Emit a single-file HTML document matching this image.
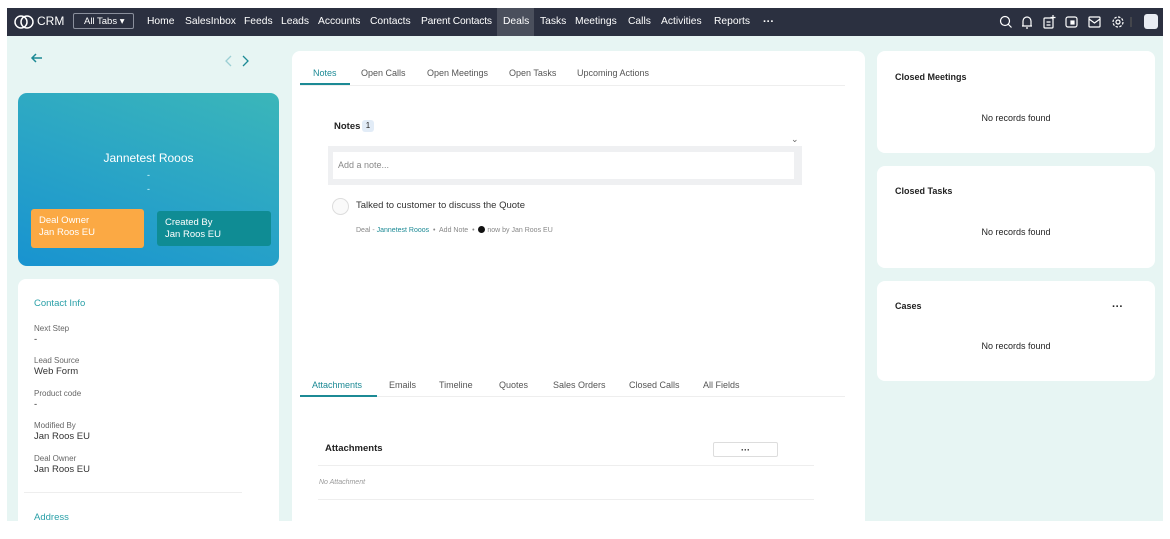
<!DOCTYPE html>
<html><head><meta charset="utf-8"><style>
*{margin:0;padding:0;box-sizing:border-box}
body{width:1170px;height:530px;background:#fff;font-family:"Liberation Sans",sans-serif;position:relative;overflow:hidden;color:#222}
.abs{position:absolute}
#page{position:absolute;left:7px;top:8px;width:1156px;height:513px;background:#e7f5f3}
#nav{position:absolute;left:7px;top:8px;width:1156px;height:28px;background:#2b3040;color:#fff;font-size:10.3px}
#nav span.t{position:absolute;top:8px;white-space:nowrap}
.card{position:absolute;background:#fff;border-radius:8px}
.tab{position:absolute;font-size:9px;color:#555;white-space:nowrap}
.lbl{position:absolute;left:34px;font-size:8px;color:#666}
.val{position:absolute;left:34px;font-size:9.5px;color:#333}
.nr{position:absolute;width:100%;text-align:center;font-size:9px;color:#222}
.ch{position:absolute;left:18px;font-size:9px;font-weight:bold;color:#222}
</style></head><body>
<div id="page"></div>
<div id="nav">
 <svg class="abs" style="left:7px;top:6px" width="20" height="16" viewBox="0 0 20 16"><circle cx="7" cy="8" r="6" fill="none" stroke="#fff" stroke-width="1.5"/><circle cx="13" cy="8" r="6" fill="none" stroke="#fff" stroke-width="1.5"/></svg>
 <span class="t" style="left:30px;font-size:12px;top:6px">CRM</span>
 <div class="abs" style="left:66px;top:5px;width:61px;height:16px;border:1px solid #8a8f9c;border-radius:2px"></div>
 <span class="t" style="left:77px;font-size:9.5px;top:8px">All Tabs ▾</span>
 <span class="t" style="left:140px">Home</span>
 <span class="t" style="left:178px">SalesInbox</span>
 <span class="t" style="left:237px">Feeds</span>
 <span class="t" style="left:274px">Leads</span>
 <span class="t" style="left:311px">Accounts</span>
 <span class="t" style="left:363px">Contacts</span>
 <span class="t" style="left:414px;letter-spacing:-0.2px">Parent Contacts</span>
 <div class="abs" style="left:490px;top:0;width:37px;height:28px;background:#4a4f5c"></div>
 <span class="t" style="left:496px">Deals</span>
 <span class="t" style="left:533px">Tasks</span>
 <span class="t" style="left:568px">Meetings</span>
 <span class="t" style="left:621px">Calls</span>
 <span class="t" style="left:654px">Activities</span>
 <span class="t" style="left:707px">Reports</span>
 <span class="t" style="left:756px;top:8px;font-weight:bold;font-size:11px">···</span>
 <svg class="abs" style="left:990px;top:6px" width="150" height="16" viewBox="0 0 150 16" fill="none" stroke="#fff" stroke-width="1.2">
  <circle cx="8" cy="7" r="4.5"/><path d="M11 10l3.5 3.5"/>
  <path d="M26 12V7a4 4 0 018 0v5zM25 12h10M29 14h2"/>
  <rect x="47" y="4" width="9" height="10" rx="1"/><path d="M49.5 8h4M49.5 11h4M56 1v5M53.5 3.5h5"/>
  <rect x="69" y="3" width="11" height="10" rx="2"/><rect x="74" y="7" width="3" height="3" fill="#fff"/>
  <rect x="92" y="3" width="11" height="10" rx="1"/><path d="M92 5l5.5 4 5.5-4"/>
  <circle cx="121" cy="8" r="2"/><circle cx="121" cy="8" r="5" stroke-dasharray="2.5 1.4"/>
  <path d="M134 3v10" stroke="#555"/>
 </svg>
 <div class="abs" style="left:1137px;top:6px;width:14px;height:15px;background:#e8ecf2;border-radius:3px"></div>
</div>

<!-- left -->
<svg class="abs" style="left:30px;top:52px" width="14" height="12" viewBox="0 0 14 12" fill="none" stroke="#1c8a95" stroke-width="1.5"><path d="M12 6H2M6 2L2 6l4 4"/></svg>
<svg class="abs" style="left:224px;top:55px" width="26" height="12" viewBox="0 0 26 12" fill="none" stroke-width="1.3"><path d="M7 1L2 6l5 5" stroke="#9ccfd4"/><path d="M19 1l5 5-5 5" stroke="#1c8a95"/></svg>
<div class="abs" style="left:18px;top:93px;width:261px;height:173px;border-radius:9px;background:linear-gradient(200deg,#3bb6b9 0%,#2aa5c6 50%,#1893d0 100%)"></div>
<div class="abs" style="left:18px;top:151px;width:261px;text-align:center;color:#fff;font-size:12px">Jannetest Rooos</div>
<div class="abs" style="left:18px;top:168px;width:261px;text-align:center;color:#dff;font-size:9px;line-height:14px">-<br>-</div>
<div class="abs" style="left:31px;top:209px;width:113px;height:39px;background:#fba944;border-radius:3px;color:#fff;font-size:9.5px;padding:6px 8px;line-height:12px">Deal Owner<br>Jan Roos EU</div>
<div class="abs" style="left:157px;top:211px;width:114px;height:35px;background:#0f8c94;border-radius:3px;color:#fff;font-size:9.5px;padding:6px 8px;line-height:12px">Created By<br>Jan Roos EU</div>

<div class="card" style="left:18px;top:279px;width:261px;height:260px"></div>
<div class="abs" style="left:34px;top:298px;font-size:9.5px;color:#2aa0a8">Contact Info</div>
<div class="lbl" style="top:324px">Next Step</div><div class="val" style="top:334px">-</div>
<div class="lbl" style="top:356px">Lead Source</div><div class="val" style="top:366px">Web Form</div>
<div class="lbl" style="top:389px">Product code</div><div class="val" style="top:399px">-</div>
<div class="lbl" style="top:421px">Modified By</div><div class="val" style="top:431px">Jan Roos EU</div>
<div class="lbl" style="top:454px">Deal Owner</div><div class="val" style="top:464px">Jan Roos EU</div>
<div class="abs" style="left:24px;top:492px;width:218px;height:1px;background:#eee"></div>
<div class="abs" style="left:34px;top:512px;font-size:9.5px;color:#2aa0a8">Address</div>

<!-- center -->
<div class="card" style="left:292px;top:51px;width:573px;height:480px"></div>
<div class="abs" style="left:300px;top:85px;width:545px;height:1px;background:#eee"></div>
<div class="tab" style="left:313px;top:68px;color:#1c8a95">Notes</div>
<div class="abs" style="left:300px;top:83px;width:50px;height:2px;background:#1c8a95"></div>
<div class="tab" style="left:361px;top:68px">Open Calls</div>
<div class="tab" style="left:427px;top:68px">Open Meetings</div>
<div class="tab" style="left:509px;top:68px">Open Tasks</div>
<div class="tab" style="left:577px;top:68px">Upcoming Actions</div>
<div class="abs" style="left:334px;top:121px;font-size:9.5px;font-weight:bold">Notes</div>
<div class="abs" style="left:362px;top:120px;width:12px;height:12px;background:#e2ecf7;border-radius:3px;font-size:8px;text-align:center;line-height:12px">1</div>
<div class="abs" style="left:791px;top:134px;font-size:9px;color:#666">⌄</div>
<div class="abs" style="left:328px;top:146px;width:474px;height:39px;background:#eff0f2"></div>
<div class="abs" style="left:333px;top:152px;width:461px;height:27px;background:#fff;font-size:9px;color:#888;padding:8px 5px">Add a note...</div>
<div class="abs" style="left:332px;top:198px;width:17px;height:17px;border-radius:50%;border:1.5px solid #ddd;background:#fafafa"></div>
<div class="abs" style="left:356px;top:200px;font-size:9.5px;color:#333">Talked to customer to discuss the Quote</div>
<div class="abs" style="left:356px;top:226px;font-size:7px;color:#888;white-space:nowrap">Deal - <span style="color:#1c8a95">Jannetest Rooos</span> &nbsp;•&nbsp; Add Note &nbsp;•&nbsp; <span style="display:inline-block;width:7px;height:7px;background:#111;border-radius:50%;vertical-align:-1px"></span> now by Jan Roos EU</div>

<div class="abs" style="left:300px;top:396px;width:545px;height:1px;background:#eee"></div>
<div class="tab" style="left:312px;top:380px;color:#1c8a95">Attachments</div>
<div class="abs" style="left:300px;top:395px;width:77px;height:2px;background:#1c8a95"></div>
<div class="tab" style="left:389px;top:380px">Emails</div>
<div class="tab" style="left:439px;top:380px">Timeline</div>
<div class="tab" style="left:499px;top:380px">Quotes</div>
<div class="tab" style="left:553px;top:380px">Sales Orders</div>
<div class="tab" style="left:629px;top:380px">Closed Calls</div>
<div class="tab" style="left:703px;top:380px">All Fields</div>
<div class="abs" style="left:325px;top:443px;font-size:9.5px;font-weight:bold">Attachments</div>
<div class="abs" style="left:713px;top:442px;width:65px;height:15px;border:1px solid #ddd;border-radius:2px;text-align:center;font-size:9px;font-weight:bold;line-height:14px">···</div>
<div class="abs" style="left:318px;top:465px;width:496px;height:1px;background:#eee"></div>
<div class="abs" style="left:319px;top:479px;font-size:7px;color:#999;font-style:italic">No Attachment</div>
<div class="abs" style="left:318px;top:499px;width:496px;height:1px;background:#eee"></div>

<!-- right -->
<div class="card" style="left:877px;top:51px;width:278px;height:102px"><div class="ch" style="top:21px">Closed Meetings</div><div class="nr" style="top:62px">No records found</div></div>
<div class="card" style="left:877px;top:166px;width:278px;height:102px"><div class="ch" style="top:20px">Closed Tasks</div><div class="nr" style="top:61px">No records found</div></div>
<div class="card" style="left:877px;top:281px;width:278px;height:100px"><div class="ch" style="top:20px">Cases</div><div class="abs" style="left:235px;top:20px;font-size:11px;font-weight:bold">···</div><div class="nr" style="top:60px">No records found</div></div>
</body></html>
